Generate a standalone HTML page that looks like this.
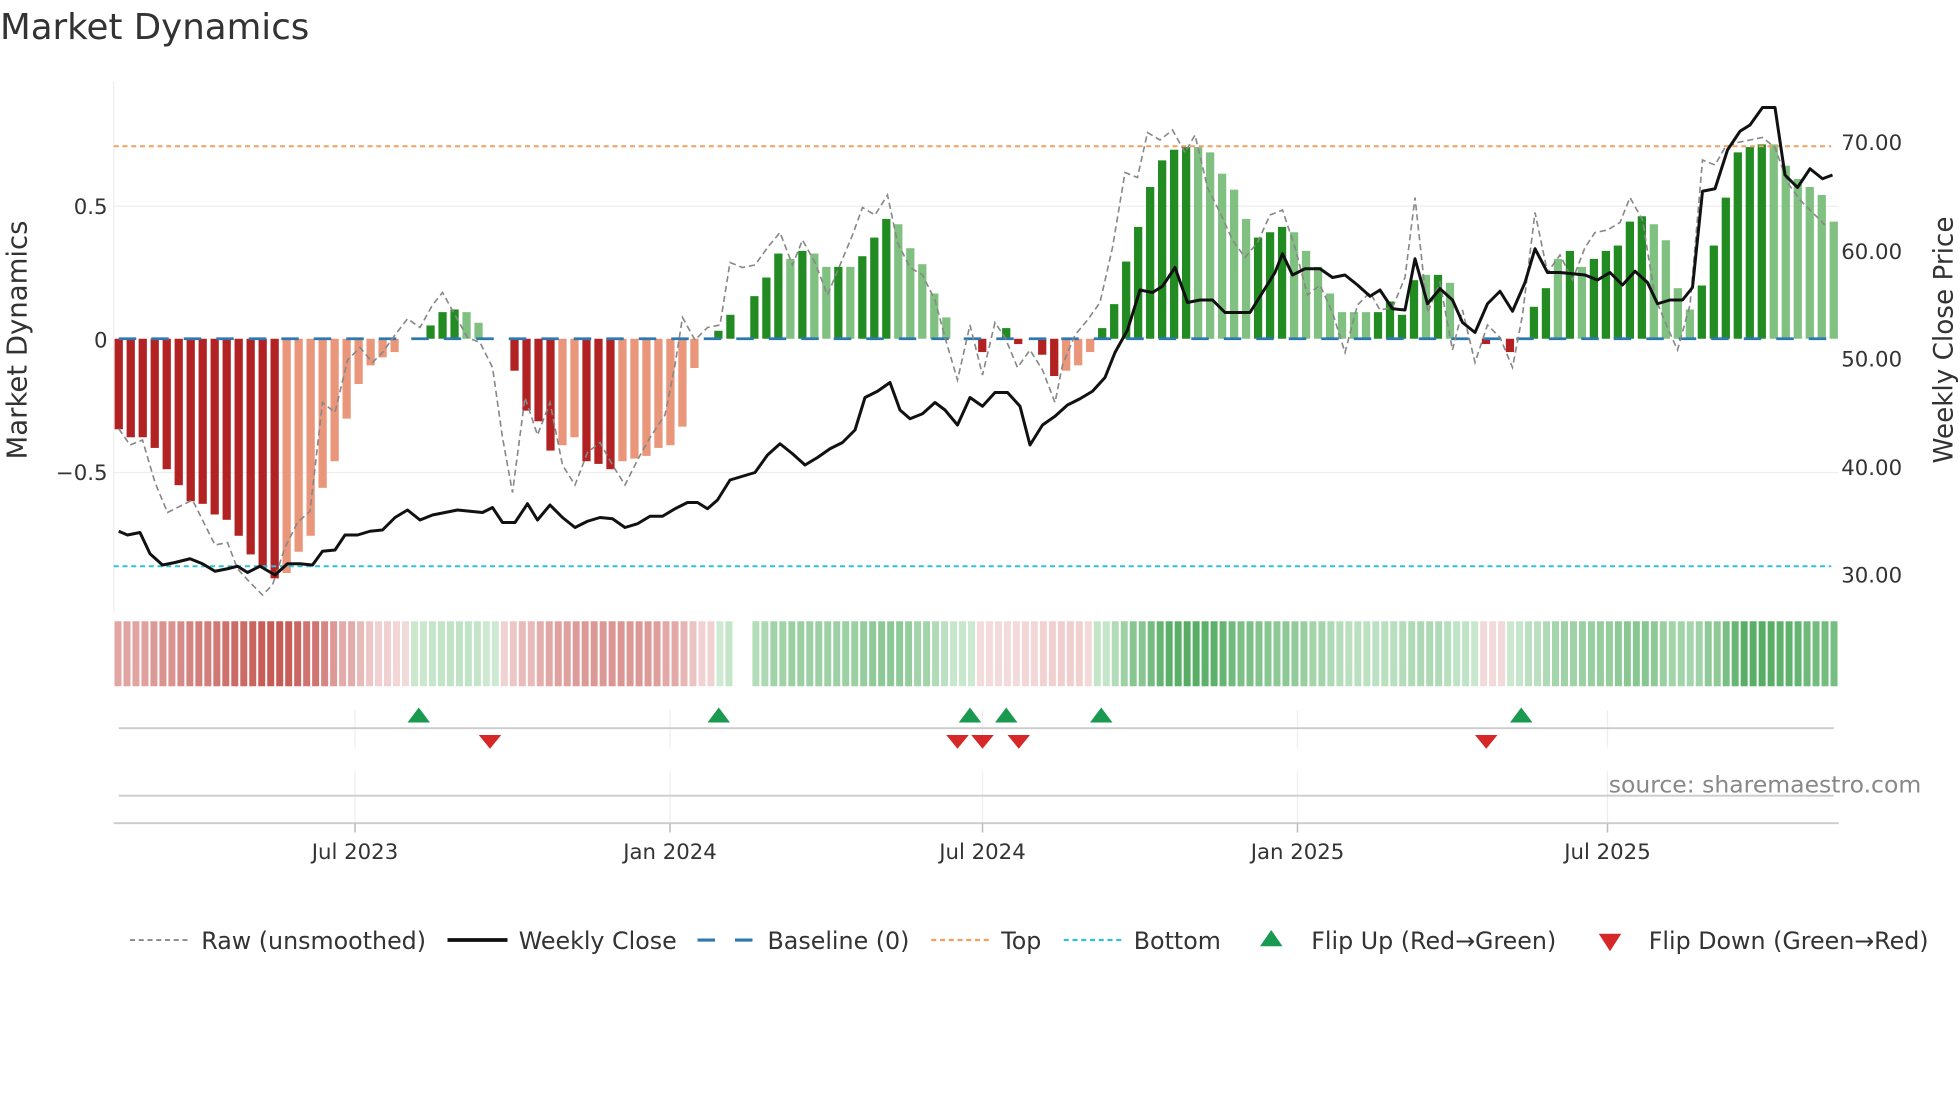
<!DOCTYPE html>
<html><head><meta charset="utf-8">
<style>
html,body{margin:0;padding:0;background:#fff;}
svg{display:block;font-family:"DejaVu Sans","Liberation Sans",sans-serif;}
</style></head>
<body>
<svg id="s" width="1960" height="1102" viewBox="0 0 1568 881.6" xmlns="http://www.w3.org/2000/svg">
<text x="0" y="31" font-size="28.5" fill="#333">Market Dynamics</text>
<g id="grid"></g>
<g id="bars"></g>
<line x1="91" y1="117" x2="1465" y2="117" stroke="#f0a060" stroke-width="1.6" stroke-dasharray="4,3"/>
<line x1="91" y1="453" x2="1465" y2="453" stroke="#30c0d8" stroke-width="1.6" stroke-dasharray="4,3"/>
<line x1="95" y1="271" x2="1465" y2="271" stroke="#2e78b0" stroke-width="2.2" stroke-dasharray="14,12"/>
<polyline id="raw" fill="none" stroke="#888" stroke-width="1.3" stroke-dasharray="5,3"/>
<polyline id="close" fill="none" stroke="#111" stroke-width="2.4" stroke-linejoin="round"/>
<g font-size="17" fill="#333">
<text x="86" y="171" text-anchor="end">0.5</text>
<text x="86" y="278" text-anchor="end">0</text>
<text x="86" y="384" text-anchor="end">−0.5</text>
<text x="1473" y="120">70.00</text>
<text x="1473" y="207">60.00</text>
<text x="1473" y="293">50.00</text>
<text x="1473" y="380">40.00</text>
<text x="1473" y="466">30.00</text>
</g>
<text transform="translate(21,272) rotate(-90)" font-size="22" fill="#333" text-anchor="middle">Market Dynamics</text>
<text transform="translate(1562,272) rotate(-90)" font-size="21" fill="#333" text-anchor="middle">Weekly Close Price</text>
<g id="heat"></g>
<g stroke="#eee" stroke-width="1">
<line x1="284" y1="568" x2="284" y2="598"/><line x1="536" y1="568" x2="536" y2="598"/><line x1="786" y1="568" x2="786" y2="598"/><line x1="1038" y1="568" x2="1038" y2="598"/><line x1="1286" y1="568" x2="1286" y2="598"/>
<line x1="284" y1="617" x2="284" y2="658"/><line x1="536" y1="617" x2="536" y2="658"/><line x1="786" y1="617" x2="786" y2="658"/><line x1="1038" y1="617" x2="1038" y2="658"/><line x1="1286" y1="617" x2="1286" y2="658"/>
</g>
<line x1="95" y1="582.5" x2="1467" y2="582.5" stroke="#ccc" stroke-width="1.5"/>
<line x1="95" y1="636.5" x2="1467" y2="636.5" stroke="#ccc" stroke-width="1.5"/>
<line x1="91" y1="658.5" x2="1471" y2="658.5" stroke="#ccc" stroke-width="1.5"/>
<g id="flips"></g>
<g stroke="#bbb" stroke-width="1.2">
<line x1="284" y1="659" x2="284" y2="666"/><line x1="536" y1="659" x2="536" y2="666"/><line x1="786" y1="659" x2="786" y2="666"/><line x1="1038" y1="659" x2="1038" y2="666"/><line x1="1286" y1="659" x2="1286" y2="666"/>
</g>
<g font-size="17" fill="#333" text-anchor="middle">
<text x="284" y="687">Jul 2023</text><text x="536" y="687">Jan 2024</text><text x="786" y="687">Jul 2024</text><text x="1038" y="687">Jan 2025</text><text x="1286" y="687">Jul 2025</text>
</g>
<text x="1537" y="634" font-size="18.8" fill="#888" text-anchor="end">source: sharemaestro.com</text>
<g font-size="19" fill="#333">
<line x1="104" y1="752" x2="150" y2="752" stroke="#888" stroke-width="1.5" stroke-dasharray="4,3"/>
<text x="161" y="759">Raw (unsmoothed)</text>
<line x1="358" y1="752" x2="406" y2="752" stroke="#111" stroke-width="3"/>
<text x="415" y="759">Weekly Close</text>
<line x1="558" y1="752" x2="604" y2="752" stroke="#2e78b0" stroke-width="2.5" stroke-dasharray="14,16"/>
<text x="614" y="759">Baseline (0)</text>
<line x1="745" y1="752" x2="791" y2="752" stroke="#f0a060" stroke-width="1.8" stroke-dasharray="4,3"/>
<text x="801" y="759">Top</text>
<line x1="851" y1="752" x2="897" y2="752" stroke="#30c0d8" stroke-width="1.8" stroke-dasharray="4,3"/>
<text x="907" y="759">Bottom</text>
<polygon points="1008,757 1017,744 1026,757" fill="#1a9a50"/>
<text x="1049" y="759">Flip Up (Red→Green)</text>
<polygon points="1279,747 1297,747 1288,761" fill="#d62828"/>
<text x="1319" y="759">Flip Down (Green→Red)</text>
</g>
</svg>
<script>
var NS="http://www.w3.org/2000/svg";
function el(p,t,a){var e=document.createElementNS(NS,t);for(var k in a)e.setAttribute(k,a[k]);p.appendChild(e);return e;}
var g=document.getElementById('grid');
[165,378].forEach(function(y){el(g,'line',{x1:91,y1:y,x2:1471,y2:y,stroke:'#eee','stroke-width':1});});
el(g,'line',{x1:91,y1:65,x2:91,y2:490,stroke:'#eee','stroke-width':1});
var V="-.34D -.37D -.37D -.41D -.49D -.55D -.61D -.62D -.66D -.68D -.74D -.81D -.86D -.90D -.88L -.80L -.74L -.56L -.46L -.30L -.17L -.10L -.07L -.05L 0L 0L .05D .10D .11D .10L .06L 0L 0L -.12D -.27D -.31D -.42D -.40L -.37L -.46D -.47D -.49D -.46L -.45L -.44L -.41L -.40L -.33L -.11L 0L .03D .09D 0L .16D .23D .32D .30L .33D .32L .27L .27D .27L .31D .38D .45D .43L .34L .28L .17L .08L 0L 0L -.05D 0L .04D -.02D 0L -.06D -.14D -.12L -.10L -.05L .04D .13D .29D .42D .57D .67D .71D .72D .72L .70L .62L .56L .45L .38D .40D .42D .40L .33L .27L .17L .10L .10L .10L .10D .14D .09D .22D .24L .24D .21L 0L 0L -.02D 0L -.05D 0L .12D .19D .30L .33D .27L .30D .33D .35D .44D .46D .43L .37L .19L .11L .20D .35D .53D .70D .72D .73D .73L .65L .60L .57L .54L .44L".split(' ');
var n=V.length, x0=95, x1=1467, dx=(x1-x0)/(n-1);
var b=document.getElementById('bars');
var vals=[];
V.forEach(function(s,i){var v=parseFloat(s),t=s.slice(-1);vals.push(v);if(v===0)return;
 var col=v<0?(t=='D'?'#b22222':'#e9967a'):(t=='D'?'#228b22':'#80c080');
 var h=Math.abs(v)*213, x=x0+i*dx-3.3;
 el(b,'rect',{x:x,y:v<0?271:271-h,width:6.6,height:h,fill:col});});
function mix(a,c,t){return 'rgb('+[0,1,2].map(function(i){return Math.round(a[i]+(c[i]-a[i])*t);}).join(',')+')';}
var h=document.getElementById('heat'), m=192, hx0=91, hw=(1471-91)/m;
for(var j=0;j<m;j++){var cx=hx0+(j+0.5)*hw; if(cx>590&&cx<600)continue;
 var fi=(cx-x0)/dx, i0=Math.max(0,Math.min(n-1,Math.round(fi)));
 var s=0,c=0;for(var k=i0-2;k<=i0+2;k++){if(k>=0&&k<n){s+=vals[k];c++;}}var v=s/c;
 var col;
 if(v<0){var t=Math.min(1,-v/0.85);col=mix([244,220,220],[198,92,86],t);}
 else{var t=Math.min(1,v/0.72);col=mix([206,234,210],[84,172,98],t);}
 el(h,'rect',{x:hx0+j*hw+0.6,y:497,width:hw-1.6,height:52,fill:col});}
function pl(id,pts){document.getElementById(id).setAttribute('points',pts);}
pl('close',"95,425 102,428 112,426 120,443 130,452 140,450 152,447 162,451 172,457 182,455 190,453 198,458 208,453 220,460 230,451 240,451 250,452 258,441 268,440 276,428 286,428 296,425 306,424 316,414 326,408 336,416 346,412 356,410 366,408 376,409 386,410 394,406 402,418 412,418 422,403 430,416 440,404 450,414 460,422 470,417 480,414 490,415 500,422 510,419 520,413 530,413 540,407 550,402 558,402 566,407 574,400 584,384 594,381 604,378 614,364 624,355 634,363 644,372 654,366 664,359 674,354 684,344 692,318 702,313 712,306 720,328 728,335 738,331 748,322 756,328 766,340 776,318 786,325 796,314 806,314 816,325 824,356 834,340 844,333 854,324 864,319 874,313 884,302 892,282 902,264 912,232 922,234 930,229 940,214 950,242 960,240 970,240 980,250 990,250 1000,250 1010,234 1020,218 1026,203 1034,220 1044,215 1056,215 1066,222 1076,220 1086,228 1096,237 1104,232 1114,247 1124,248 1132,207 1142,243 1152,231 1162,240 1170,258 1180,266 1190,243 1200,233 1210,249 1220,226 1228,199 1238,218 1248,218 1258,219 1268,220 1278,224 1288,218 1298,228 1308,217 1318,226 1326,243 1336,240 1346,240 1354,230 1362,153 1372,151 1382,120 1392,105 1400,100 1410,86 1420,86 1428,140 1438,150 1448,135 1458,143 1466,140");
pl('raw',"95,343 104,356 114,352 124,386 134,410 144,405 154,400 164,420 172,436 182,434 190,455 200,466 210,476 218,468 228,438 238,418 248,409 258,322 268,330 278,288 288,278 298,290 306,282 316,268 326,255 336,262 346,244 354,234 364,252 374,270 384,274 394,294 402,350 410,394 420,318 430,348 440,322 450,372 460,388 470,362 480,354 490,372 500,388 510,368 520,350 532,332 540,292 546,254 556,272 566,262 576,260 584,210 594,214 604,212 614,198 624,186 634,212 642,192 652,210 662,236 672,212 682,188 690,166 700,172 710,156 718,194 728,214 738,220 748,240 756,270 766,304 776,260 786,300 796,258 804,270 814,294 824,280 834,296 844,322 850,292 860,268 870,256 880,242 890,198 900,138 910,142 918,106 928,112 938,104 948,122 956,108 966,150 976,170 986,192 996,206 1006,194 1016,172 1026,168 1036,198 1046,236 1056,228 1066,250 1076,282 1086,244 1096,234 1104,248 1114,246 1124,222 1132,158 1142,250 1152,226 1162,280 1170,248 1180,290 1190,260 1200,270 1210,294 1218,252 1228,170 1238,218 1248,204 1258,224 1268,198 1276,186 1286,184 1296,178 1304,158 1314,176 1324,238 1334,262 1342,280 1352,244 1362,128 1372,132 1380,118 1390,114 1400,112 1410,110 1420,118 1430,146 1440,160 1450,170 1460,180");
var f=document.getElementById('flips');
[335,575,776,805,881,1217].forEach(function(x){el(f,'polygon',{points:(x-9)+',578 '+x+',566 '+(x+9)+',578',fill:'#1a9a50'});});
[392,766,786,815,1189].forEach(function(x){el(f,'polygon',{points:(x-9)+',588 '+(x+9)+',588 '+x+',599',fill:'#d62828'});});
</script>
</body></html>
